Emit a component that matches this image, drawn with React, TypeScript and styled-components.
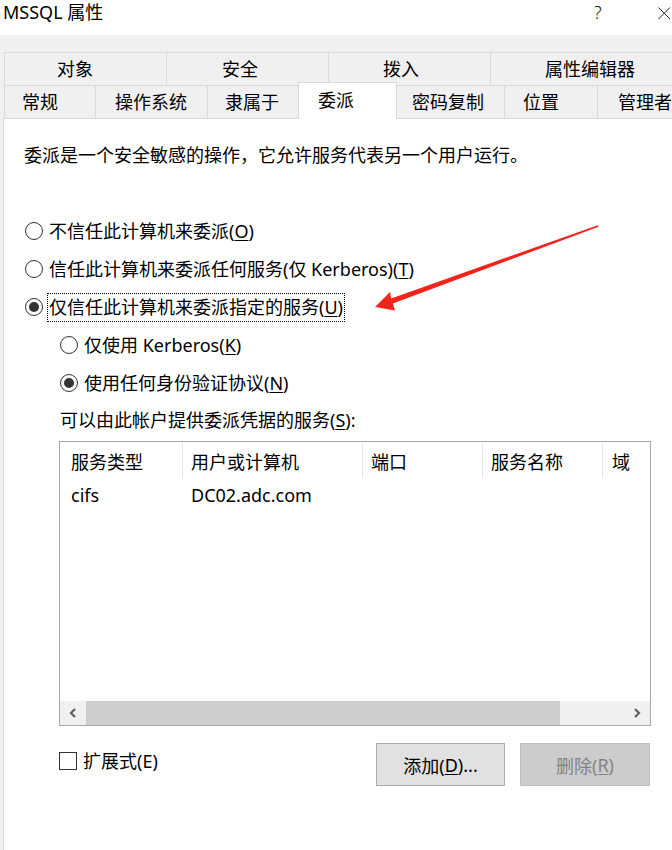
import React from "react";
import styled, { createGlobalStyle } from "styled-components";

const Global = createGlobalStyle`
  html, body { margin: 0; padding: 0; background: #fff; overflow: hidden; }
  body { font-family: "Noto Sans", "Noto Sans CJK SC", sans-serif; color: #000; }
  * { box-sizing: border-box; }
`;

const Window = styled.div`
  position: relative;
  width: 672px;
  height: 850px;
  display: flex;
  flex-direction: column;
  background: #fff;
  overflow: hidden;
  font-size: 18px;
`;

const TitleBar = styled.div`
  height: 35px;
  flex-shrink: 0;
  display: flex;
  align-items: flex-start;
  background: #fff;
`;

const Title = styled.div`
  flex: 1;
  padding-left: 3px;
  font-size: 18px;
  line-height: 24px;
`;

const Help = styled.div`
  width: 64px;
  font-size: 18px;
  line-height: 24px;
  font-weight: 300;
  color: #111;
`;

const Close = styled.svg`
  margin-top: 7px;
  flex-shrink: 0;
`;

const TabArea = styled.div`
  flex: 1;
  display: flex;
  flex-direction: column;
  background: #f0f0f0;
  padding-top: 17px;
`;

const TabRow = styled.div`
  display: flex;
  height: 33px;
  flex-shrink: 0;
  padding-left: 4px;
  white-space: nowrap;
`;

const Tab = styled.div<{ $w: number; $pad: number; $sel?: boolean }>`
  flex-shrink: 0;
  width: ${(p) => p.$w}px;
  height: ${(p) => (p.$sel ? 37 : 33)}px;
  margin-top: ${(p) => (p.$sel ? -3 : 0)}px;
  margin-left: ${(p) => (p.$sel ? -2 : 0)}px;
  margin-right: ${(p) => (p.$sel ? -3 : -1)}px;
  border: 1px solid #d9d9d9;
  border-bottom: none;
  background: ${(p) => (p.$sel ? "#fff" : "#f0f0f0")};
  position: relative;
  z-index: ${(p) => (p.$sel ? 2 : 1)};
  display: flex;
  align-items: center;
  justify-content: flex-start;
  padding-left: ${(p) => p.$pad}px;
  padding-bottom: ${(p) => (p.$sel ? 3 : 0)}px;
  line-height: 20px;
`;

const Panel = styled.div`
  flex: 1;
  margin-left: 3px;
  border-left: 1px solid #d9d9d9;
  border-top: 1px solid #d9d9d9;
  background: #fff;
  padding-left: 20px;
  display: flex;
  flex-direction: column;
`;

const Desc = styled.div`
  margin-top: 24px;
  line-height: 24px;
  white-space: nowrap;
`;

const Options = styled.div`
  margin-top: 45px;
  display: flex;
  flex-direction: column;
`;

const RadioRow = styled.div<{ $indent: number }>`
  height: 38px;
  display: flex;
  align-items: center;
  padding-left: ${(p) => p.$indent + 1}px;
`;

const RadioCircle = styled.span<{ $checked?: boolean }>`
  width: 18px;
  height: 18px;
  flex-shrink: 0;
  border-radius: 50%;
  border: 1px solid #333;
  background: #fff;
  display: flex;
  align-items: center;
  justify-content: center;
  &::after {
    content: "";
    width: 10px;
    height: 10px;
    border-radius: 50%;
    background: ${(p) => (p.$checked ? "#333" : "transparent")};
  }
`;

const OptLabel = styled.span<{ $focus?: boolean }>`
  margin-left: 4px;
  padding: 0 1px;
  line-height: 27px;
  border: 1px dotted ${(p) => (p.$focus ? "#000" : "transparent")};
  white-space: nowrap;
`;

const Key = styled.span`
  text-decoration: underline;
  text-underline-offset: 2px;
`;

const Caption = styled.div`
  margin-top: 6px;
  padding-left: 36px;
  line-height: 24px;
`;

const List = styled.div`
  margin-top: 9px;
  margin-left: 35px;
  width: 592px;
  height: 285px;
  border: 1px solid #a9a9a9;
  display: flex;
  flex-direction: column;
`;

const Grid = styled.div<{ $h: number }>`
  display: grid;
  grid-template-columns: 123px 180px 120px 120px 1fr;
  height: ${(p) => p.$h}px;
  flex-shrink: 0;
`;

const HeadCell = styled.div<{ $pad: number; $last?: boolean }>`
  display: flex;
  align-items: center;
  padding-left: ${(p) => p.$pad}px;
  border-right: ${(p) => (p.$last ? "none" : "1px solid #e5e5e5")};
  margin: 1px 0;
  white-space: nowrap;
`;

const Cell = styled.div<{ $pad: number }>`
  display: flex;
  align-items: center;
  padding-left: ${(p) => p.$pad}px;
  white-space: nowrap;
`;

const ListFill = styled.div`
  flex: 1;
`;

const ScrollBar = styled.div`
  height: 24px;
  flex-shrink: 0;
  display: flex;
  background: #f0f0f0;
`;

const ScrollBtn = styled.div`
  width: 26px;
  display: flex;
  align-items: center;
  justify-content: center;
  flex-shrink: 0;
`;

const Track = styled.div`
  flex: 1;
  display: flex;
`;

const Thumb = styled.div`
  width: 474px;
  background: #cdcdcd;
`;

const BottomRow = styled.div`
  margin-top: 17px;
  margin-left: 35px;
  width: 592px;
  padding-right: 1px;
  height: 43px;
  display: flex;
  align-items: flex-start;
`;

const CheckGroup = styled.div`
  margin-top: 8px;
  display: flex;
  align-items: center;
`;

const CheckBox = styled.span`
  width: 18px;
  height: 18px;
  border: 1px solid #333;
  background: #fff;
  flex-shrink: 0;
`;

const CheckLabel = styled.span`
  margin-left: 6px;
  line-height: 20px;
`;

const Buttons = styled.div`
  margin-left: auto;
  display: flex;
  gap: 15px;
`;

const Button = styled.div<{ $w: number; $disabled?: boolean }>`
  width: ${(p) => p.$w}px;
  height: 43px;
  border: 1px solid ${(p) => (p.$disabled ? "#bfbfbf" : "#adadad")};
  background: ${(p) => (p.$disabled ? "#cccccc" : "#e1e1e1")};
  color: ${(p) => (p.$disabled ? "#838383" : "#000")};
  display: flex;
  align-items: center;
  justify-content: center;
  padding-top: 1px;
  white-space: nowrap;
`;

const Overlay = styled.svg`
  position: absolute;
  left: 0;
  top: 0;
  pointer-events: none;
  z-index: 5;
`;

const row1 = [
  { t: "对象", w: 163, pad: 52 },
  { t: "安全", w: 163, pad: 55 },
  { t: "拨入", w: 163, pad: 54 },
  { t: "属性编辑器", w: 201, pad: 54 },
];

const row2 = [
  { t: "常规", w: 92, pad: 17 },
  { t: "操作系统", w: 113, pad: 19 },
  { t: "隶属于", w: 94, pad: 17 },
  { t: "委派", w: 99, pad: 19, sel: true },
  { t: "密码复制", w: 111, pad: 17 },
  { t: "位置", w: 94, pad: 18 },
  { t: "管理者", w: 94, pad: 20 },
];

const cols = [
  { t: "服务类型", pad: 11 },
  { t: "用户或计算机", pad: 8 },
  { t: "端口", pad: 8 },
  { t: "服务名称", pad: 8 },
  { t: "域", pad: 9 },
];

const Chevron = ({ dir }: { dir: "l" | "r" }) => (
  <svg width="8" height="10" viewBox="0 0 8 10">
    <polyline
      points={dir === "l" ? "6,1 2,5 6,9" : "2,1 6,5 2,9"}
      fill="none"
      stroke="#606060"
      strokeWidth="2.2"
    />
  </svg>
);

export default function App() {
  return (
    <>
      <Global />
      <Window>
        <TitleBar>
          <Title>MSSQL 属性</Title>
          <Help>?</Help>
          <Close width="14" height="12" viewBox="0 0 14 12">
            <line x1="0.5" y1="0.5" x2="12" y2="12" stroke="#222" strokeWidth="1" />
            <line x1="12" y1="0.5" x2="0.5" y2="12" stroke="#222" strokeWidth="1" />
          </Close>
        </TitleBar>
        <TabArea>
          <TabRow>
            {row1.map((t) => (
              <Tab key={t.t} $w={t.w} $pad={t.pad}>
                {t.t}
              </Tab>
            ))}
          </TabRow>
          <TabRow>
            {row2.map((t) => (
              <Tab key={t.t} $w={t.w} $pad={t.pad} $sel={t.sel}>
                {t.t}
              </Tab>
            ))}
          </TabRow>
          <Panel>
            <Desc>委派是一个安全敏感的操作，它允许服务代表另一个用户运行。</Desc>
            <Options>
              <RadioRow $indent={0}>
                <RadioCircle />
                <OptLabel>
                  不信任此计算机来委派(<Key>O</Key>)
                </OptLabel>
              </RadioRow>
              <RadioRow $indent={0}>
                <RadioCircle />
                <OptLabel>
                  信任此计算机来委派任何服务(仅 Kerberos)(<Key>T</Key>)
                </OptLabel>
              </RadioRow>
              <RadioRow $indent={0}>
                <RadioCircle $checked />
                <OptLabel $focus>
                  仅信任此计算机来委派指定的服务(<Key>U</Key>)
                </OptLabel>
              </RadioRow>
              <RadioRow $indent={35}>
                <RadioCircle />
                <OptLabel>
                  仅使用 Kerberos(<Key>K</Key>)
                </OptLabel>
              </RadioRow>
              <RadioRow $indent={35}>
                <RadioCircle $checked />
                <OptLabel>
                  使用任何身份验证协议(<Key>N</Key>)
                </OptLabel>
              </RadioRow>
            </Options>
            <Caption>
              可以由此帐户提供委派凭据的服务(<Key>S</Key>):
            </Caption>
            <List>
              <Grid $h={37}>
                {cols.map((c, i) => (
                  <HeadCell key={c.t} $pad={c.pad} $last={i === cols.length - 1}>
                    {c.t}
                  </HeadCell>
                ))}
              </Grid>
              <Grid $h={32}>
                <Cell $pad={11}>cifs</Cell>
                <Cell $pad={8}>DC02.adc.com</Cell>
                <Cell $pad={8} />
                <Cell $pad={8} />
                <Cell $pad={9} />
              </Grid>
              <ListFill />
              <ScrollBar>
                <ScrollBtn>
                  <Chevron dir="l" />
                </ScrollBtn>
                <Track>
                  <Thumb />
                </Track>
                <ScrollBtn>
                  <Chevron dir="r" />
                </ScrollBtn>
              </ScrollBar>
            </List>
            <BottomRow>
              <CheckGroup>
                <CheckBox />
                <CheckLabel>扩展式(E)</CheckLabel>
              </CheckGroup>
              <Buttons>
                <Button $w={129}>
                  添加(<Key>D</Key>)...
                </Button>
                <Button $w={130} $disabled>
                  删除(<Key>R</Key>)
                </Button>
              </Buttons>
            </BottomRow>
          </Panel>
        </TabArea>
        <Overlay width="672" height="850" viewBox="0 0 672 850">
          <polygon
            points="375,307 390,292 391.2,298.4 597.8,225.2 598.6,226.8 392.8,303.4 395,310.5"
            fill="#f2231b"
          />
        </Overlay>
      </Window>
    </>
  );
}
